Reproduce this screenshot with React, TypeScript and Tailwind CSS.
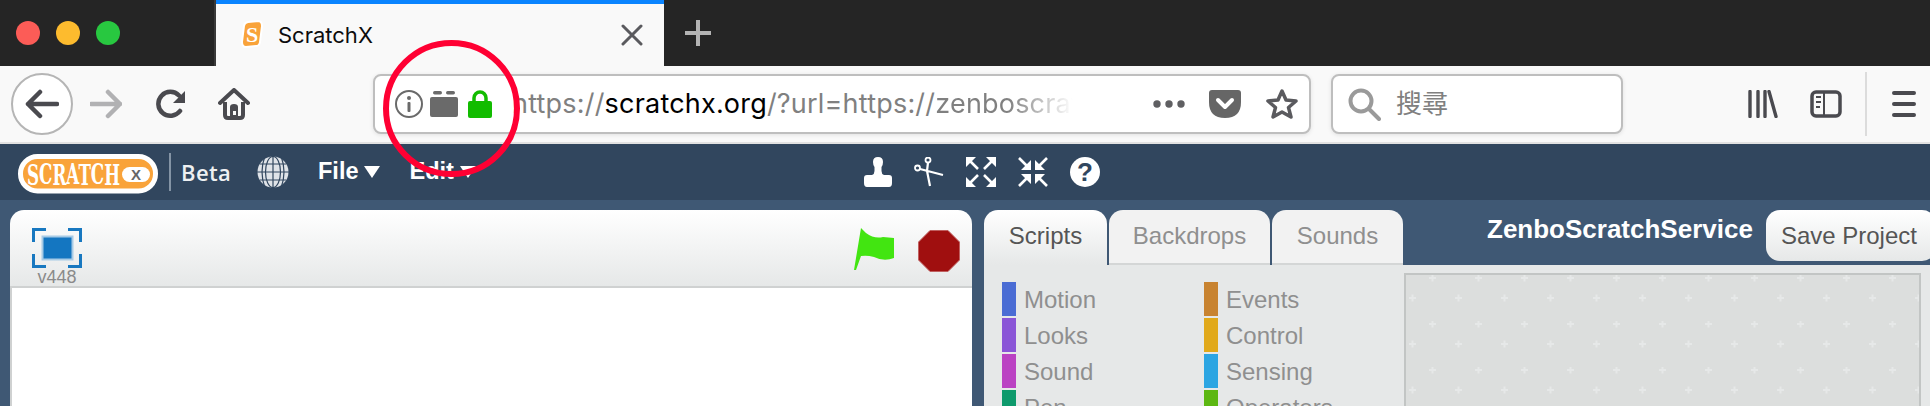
import React from 'react';

const sans = "font-['Liberation_Sans',Arial,sans-serif]";
const ui = "font-['Inter','Noto_Sans_CJK_TC',sans-serif]";

const categories = [
  { name: 'Motion', color: 'bg-[#4a6cd4]' },
  { name: 'Events', color: 'bg-[#c88330]' },
  { name: 'Looks', color: 'bg-[#8a55d7]' },
  { name: 'Control', color: 'bg-[#e1a91a]' },
  { name: 'Sound', color: 'bg-[#bb42c3]' },
  { name: 'Sensing', color: 'bg-[#2ca5e2]' },
  { name: 'Pen', color: 'bg-[#0e9a6c]' },
  { name: 'Operators', color: 'bg-[#5cb712]' },
];

const Favicon: React.FC = () => (
  <svg width="24" height="28" viewBox="0 0 24 28" className="mb-[3px] shrink-0">
    <path d="M8 2 L18 1 Q22 1 22 6 L20 22 Q19.5 26 16 26 L6 27 Q2 27 2 22 L4 6 Q4.5 2.5 8 2Z" fill="#f9a33a" stroke="#fff" strokeWidth="2" />
    <text x="12" y="22" textAnchor="middle" fontFamily="Liberation Serif" fontWeight="700" fontSize="22" fill="#fff">S</text>
  </svg>
);

const TabStrip: React.FC = () => (
  <div className="flex h-[66px] shrink-0 bg-[#252525]">
    <div className="flex w-[216px] shrink-0 items-center gap-[16px] pl-[16px] border-r-2 border-[#3a3a3a]">
      <span className="size-[24px] rounded-full bg-[#fc5c57]" />
      <span className="size-[24px] rounded-full bg-[#fdbb2e]" />
      <span className="size-[24px] rounded-full bg-[#28c840]" />
    </div>
    <div className={`flex w-[448px] shrink-0 items-center border-t-4 border-[#0a84ff] bg-[#f9f9f9] pl-[24px] ${ui}`}>
      <Favicon />
      <span className="ml-[14px] text-[22px] leading-none text-[#0c0c0d]">ScratchX</span>
      <svg width="22" height="22" viewBox="0 0 22 22" className="ml-[248px]">
        <path d="M2 2 L20 20 M20 2 L2 20" stroke="#5a5a5e" strokeWidth="3" strokeLinecap="round" />
      </svg>
    </div>
    <div className="flex flex-1 items-center pl-[20px]">
      <svg width="28" height="28" viewBox="0 0 28 28">
        <path d="M14 1 V27 M1 14 H27" stroke="#b4b4b4" strokeWidth="4" />
      </svg>
    </div>
  </div>
);

const NavIcons: React.FC = () => (
  <>
    <div className="flex size-[62px] shrink-0 items-center justify-center rounded-full border-2 border-[#b5b5b5] bg-white">
      <svg width="34" height="30" viewBox="0 0 34 30">
        <path d="M32 15 H3 M15 3 L3 15 L15 27" fill="none" stroke="#4a4a4f" strokeWidth="4.5" strokeLinecap="round" strokeLinejoin="round" />
      </svg>
    </div>
    <svg width="32" height="30" viewBox="0 0 32 30" className="ml-[17px] shrink-0">
      <path d="M1 15 H30 M18 3 L30 15 L18 27" fill="none" stroke="#b1b1b3" strokeWidth="4.5" strokeLinecap="round" strokeLinejoin="round" />
    </svg>
    <svg width="30" height="30" viewBox="0 0 30 30" className="ml-[34px] shrink-0">
      <path d="M24 22 A12 12 0 1 1 23 6.5" fill="none" stroke="#4a4a4f" strokeWidth="4.5" strokeLinecap="round" />
      <path d="M29 2 V14 H17Z" fill="#4a4a4f" />
    </svg>
    <svg width="32" height="32" viewBox="0 0 32 32" className="ml-[32px] shrink-0">
      <path d="M2 15 L16 2 L30 15" fill="none" stroke="#4a4a4f" strokeWidth="4" strokeLinecap="round" strokeLinejoin="round" />
      <path d="M7 14 V27 Q7 30 10 30 H22 Q25 30 25 27 V14" fill="none" stroke="#4a4a4f" strokeWidth="4" />
      <path d="M12 30 V19 Q12 16 16 16 Q20 16 20 19 V30Z" fill="#4a4a4f" />
      <rect x="15" y="23" width="3" height="4" fill="#f9f9f9" />
    </svg>
  </>
);

const SiteIcons: React.FC = () => (
  <div className="flex shrink-0 items-center">
    <svg width="30" height="30" viewBox="0 0 30 30" className="ml-[19px]">
      <circle cx="15" cy="15" r="13" fill="none" stroke="#6a6a6a" strokeWidth="2" />
      <circle cx="15" cy="9" r="2" fill="#6a6a6a" />
      <rect x="13.5" y="13" width="3" height="10" rx="1" fill="#6a6a6a" />
    </svg>
    <svg width="28" height="26" viewBox="0 0 28 26" className="ml-[6px]">
      <rect x="3" y="0" width="9" height="3.5" rx="1.7" fill="#6a6a6a" />
      <rect x="16" y="0" width="9" height="3.5" rx="1.7" fill="#6a6a6a" />
      <rect x="0" y="6" width="28" height="20" rx="2" fill="#6a6a6a" />
    </svg>
    <svg width="24" height="28" viewBox="0 0 24 28" className="ml-[10px]">
      <path d="M6 13 V8 A6 6 0 0 1 18 8 V13" fill="none" stroke="#12bc00" strokeWidth="3.5" />
      <rect x="0" y="11" width="24" height="17" rx="2" fill="#12bc00" />
    </svg>
  </div>
);

const UrlBar: React.FC = () => (
  <div className={`ml-[123px] flex h-[60px] w-[938px] shrink-0 items-center rounded-[8px] border-2 border-[#bebebe] bg-white shadow-[0_1px_4px_rgba(0,0,0,0.1)] ${ui}`}>
    <SiteIcons />
    <div className="ml-[20px] w-[572px] shrink-0 overflow-hidden whitespace-nowrap text-[27px] leading-[34px] tracking-[0.2px] text-[#808080]">
      https://<span className="text-black">scratchx.org</span>/?url=https://
      <span className="bg-linear-to-r from-[#808080] from-50% to-white to-95% bg-clip-text text-transparent">zenboscrat</span>
    </div>
    <svg width="32" height="8" viewBox="0 0 32 8" className="ml-[69px] shrink-0">
      <circle cx="4" cy="4" r="3.7" fill="#5f5f62" />
      <circle cx="16" cy="4" r="3.7" fill="#5f5f62" />
      <circle cx="28" cy="4" r="3.7" fill="#5f5f62" />
    </svg>
    <svg width="32" height="28" viewBox="0 0 32 28" className="ml-[24px] shrink-0">
      <path d="M3 0 H29 Q32 0 32 3 V12 Q32 28 16 28 Q0 28 0 12 V3 Q0 0 3 0Z" fill="#666" />
      <path d="M9 10 L16 17 L23 10" fill="none" stroke="#fff" strokeWidth="4" strokeLinecap="round" strokeLinejoin="round" />
    </svg>
    <svg width="32" height="32" viewBox="0 0 32 32" className="ml-[25px] shrink-0">
      <path d="M16 3 L20 12 L30 13 L22.5 19.5 L25 29 L16 24 L7 29 L9.5 19.5 L2 13 L12 12Z" fill="none" stroke="#5a5a5e" strokeWidth="3.5" strokeLinejoin="round" />
    </svg>
  </div>
);

const SearchBar: React.FC = () => (
  <div className={`ml-[20px] flex h-[60px] w-[292px] shrink-0 items-center rounded-[8px] border-2 border-[#bebebe] bg-white pl-[15px] shadow-[0_1px_4px_rgba(0,0,0,0.1)] ${ui}`}>
    <svg width="33" height="33" viewBox="0 0 33 33" className="shrink-0">
      <circle cx="13" cy="13" r="10.5" fill="none" stroke="#9a9a9a" strokeWidth="4" />
      <path d="M21 21 L31 31" stroke="#9a9a9a" strokeWidth="4" strokeLinecap="round" />
    </svg>
    <span className="ml-[15px] text-[26px] leading-none text-[#808080]">搜尋</span>
  </div>
);

const RightIcons: React.FC = () => (
  <>
    <svg width="30" height="28" viewBox="0 0 30 28" className="ml-[125px] shrink-0">
      <path d="M2 1.5 V26.5 M10 1.5 V26.5 M17 1.5 V26.5 M21 1.5 L28 26.5" stroke="#4a4a4f" strokeWidth="3.4" strokeLinecap="round" />
    </svg>
    <svg width="32" height="28" viewBox="0 0 32 28" className="ml-[32px] shrink-0">
      <rect x="2" y="2" width="28" height="24" rx="4" fill="none" stroke="#4a4a4f" strokeWidth="3.5" />
      <path d="M14 2 V26" stroke="#4a4a4f" strokeWidth="2" />
      <path d="M6 7 H11 M6 12 H11 M6 17 H10" stroke="#4a4a4f" strokeWidth="2" />
    </svg>
    <div className="ml-[23px] h-[64px] w-[2px] shrink-0 bg-[#dcdcdc]" />
    <svg width="24" height="26" viewBox="0 0 24 26" className="ml-[25px] shrink-0">
      <path d="M2 2 H22 M2 13 H22 M2 24 H22" stroke="#4a4a4f" strokeWidth="4" strokeLinecap="round" />
    </svg>
  </>
);

const Toolbar: React.FC = () => (
  <div className="flex h-[78px] shrink-0 items-center border-b-2 border-[#e2e2e2] bg-[#f9f9f9] pl-[11px]">
    <NavIcons />
    <UrlBar />
    <SearchBar />
    <RightIcons />
  </div>
);

const ScratchLogo: React.FC = () => (
  <svg width="140" height="44" viewBox="0 0 140 44" className="shrink-0">
    <rect x="2.5" y="6.5" width="135" height="34.5" rx="17" fill="#f9a33a" stroke="#fff" strokeWidth="5" />
    <text x="9" y="35" dy="0 -1 1 -1 1 -1 1" fontFamily="DejaVu Serif" fontWeight="700" fontSize="27" textLength="93" lengthAdjust="spacingAndGlyphs" fill="#fff">
      SCRATCH
    </text>
    <rect x="104" y="17" width="28" height="15" rx="7.5" fill="#fff" />
    <text x="118" y="30" textAnchor="middle" fontFamily="Liberation Sans" fontWeight="700" fontSize="15" fill="#666">X</text>
  </svg>
);

const Caret: React.FC = () => (
  <svg width="16" height="12" viewBox="0 0 16 12" className="ml-[6px] shrink-0">
    <path d="M0 0 H16 L8 12Z" fill="#fff" />
  </svg>
);

const Globe: React.FC = () => (
  <svg width="32" height="32" viewBox="0 0 32 32" className="ml-[26px] shrink-0">
    <circle cx="16" cy="16" r="15.5" fill="#dfe3e8" />
    <g fill="none" stroke="#31465e" strokeWidth="1.2">
      <ellipse cx="16" cy="16" rx="7.5" ry="15.5" />
      <path d="M16 0 V32 M0 16 H32 M3 8 H29 M3 24 H29 M8 0 Q2 16 8 32 M24 0 Q30 16 24 32" />
    </g>
  </svg>
);

const EditorTools: React.FC = () => (
  <div className="ml-[387px] flex shrink-0 items-center">
    <svg width="30" height="30" viewBox="0 0 30 30" className="shrink-0">
      <path d="M15 0 Q20 0 20 5 Q20 8 18.5 10 V14 Q18.5 17 21 18 H26 Q29 18 29 21 V26 Q29 30 26 30 H4 Q1 30 1 26 V21 Q1 18 4 18 H9 Q11.5 17 11.5 14 V10 Q10 8 10 5 Q10 0 15 0Z" fill="#fff" />
    </svg>
    <svg width="30" height="30" viewBox="0 0 30 30" className="ml-[21px] shrink-0">
      <circle cx="14" cy="3" r="2.5" fill="none" stroke="#fff" strokeWidth="1.8" />
      <circle cx="3.5" cy="11" r="2.5" fill="none" stroke="#fff" strokeWidth="1.8" />
      <path d="M14 5.5 L13 14 L16 29 M6 12 L29 18" fill="none" stroke="#fff" strokeWidth="2.2" />
    </svg>
    <svg width="30" height="30" viewBox="0 0 30 30" className="ml-[22px] shrink-0">
      <path d="M3 3 L12 12 M27 3 L18 12 M3 27 L12 18 M27 27 L18 18" stroke="#fff" strokeWidth="2.6" />
      <path d="M0 0 H10 L0 10Z M30 0 V10 L20 0Z M0 30 V20 L10 30Z M30 30 H20 L30 20Z" fill="#fff" />
    </svg>
    <svg width="30" height="30" viewBox="0 0 30 30" className="ml-[22px] shrink-0">
      <path d="M1 1 L9 9 M29 1 L21 9 M1 29 L9 21 M29 29 L21 21" stroke="#fff" strokeWidth="2.6" />
      <path d="M13 13 H3 L13 3Z M17 13 V3 L27 13Z M13 17 V27 L3 17Z M17 17 H27 L17 27Z" fill="#fff" />
    </svg>
    <div className={`ml-[22px] flex size-[30px] shrink-0 items-center justify-center rounded-full bg-white text-[26px] font-bold leading-none text-[#31465e] ${sans}`}>
      ?
    </div>
  </div>
);

const TopBar: React.FC = () => (
  <div className={`flex h-[56px] shrink-0 items-center bg-[#31465e] pl-[18px] ${sans}`}>
    <ScratchLogo />
    <div className="ml-[11px] h-[38px] w-[2px] shrink-0 bg-[#8494a5]" />
    <span className="ml-[10px] w-[50px] shrink-0 text-[22px] leading-none tracking-[0.4px] text-[#eef0f2] font-['Open_Sans',sans-serif] font-semibold">Beta</span>
    <Globe />
    <span className="ml-[29px] text-[23.5px] font-bold leading-none text-white">File</span>
    <Caret />
    <span className="ml-[29px] text-[23.5px] font-bold leading-none text-white">Edit</span>
    <Caret />
    <EditorTools />
  </div>
);

const FullscreenIcon: React.FC = () => (
  <svg width="50" height="40" viewBox="0 0 50 40" className="shrink-0">
    <path d="M14 1.5 H1.5 V14 M36 1.5 H48.5 V14 M14 38.5 H1.5 V26 M36 38.5 H48.5 V26" fill="none" stroke="#1878c0" strokeWidth="3" />
    <rect x="10.5" y="8.5" width="30" height="23" fill="#1476c1" stroke="#a8cbe6" strokeWidth="2" />
  </svg>
);

const Stage: React.FC = () => (
  <div className="ml-[10px] flex w-[962px] shrink-0 flex-col">
    <div className="flex h-[76px] shrink-0 items-start justify-between rounded-t-[14px] bg-linear-to-b from-white to-[#e6e8e8] pl-[22px] pr-[12px] pt-[18px]">
      <div className="flex flex-col items-center">
        <FullscreenIcon />
        <span className={`mt-[1px] text-[18px] leading-[17px] text-[#8a8a8a] ${sans}`}>v448</span>
      </div>
      <div className="flex items-start">
        <svg width="40" height="42" viewBox="0 0 40 42" className="shrink-0">
          <path d="M7 0 L12 5 Q20 11 29 9 L40 10 V30 Q30 34 20 29 Q13 27 7 28 L2 42 L0 42Z" fill="#42e511" />
        </svg>
        <svg width="42" height="42" viewBox="0 0 42 42" className="ml-[24px] mt-[2px] shrink-0">
          <path d="M12 0.5 H30 L41.5 12 V30 L30 41.5 H12 L0.5 30 V12Z" fill="#a00f0f" stroke="#c06060" strokeWidth="1" />
        </svg>
      </div>
    </div>
    <div className="flex-1 border-t-2 border-l-2 border-[#cfd1d1] bg-white" />
  </div>
);

const ScriptArea: React.FC = () => (
  <div className="mt-[8px] h-[200px] w-[517px] shrink-0 border-2 border-b-0 border-[#c2c5c4] bg-[#dcdedd]">
    <svg width="100%" height="100%">
      <defs>
        <pattern id="grid" width="46" height="46" patternUnits="userSpaceOnUse">
          <path d="M23 3 H30 M26.5 -0.5 V6.5 M3 23 H10 M6.5 19.5 V26.5" stroke="#e6e8e8" strokeWidth="2" />
        </pattern>
      </defs>
      <rect width="100%" height="100%" fill="url(#grid)" />
    </svg>
  </div>
);

const ScriptsPanel: React.FC = () => (
  <div className={`ml-[12px] flex min-w-0 flex-1 flex-col ${sans}`}>
    <div className="flex h-[55px] shrink-0 items-start">
      <div className="flex h-[55px] w-[123px] shrink-0 justify-center rounded-t-[14px] bg-linear-to-b from-white to-[#e6e8e8] pt-[12px] text-[24px] leading-[28px] text-[#555]">
        Scripts
      </div>
      <div className="ml-[2px] flex h-[55px] w-[161px] shrink-0 justify-center rounded-t-[14px] border-b-2 border-[#d4d6d6] bg-[#f2f2f2] pt-[12px] text-[24px] leading-[28px] text-[#8f8f8f]">
        Backdrops
      </div>
      <div className="ml-[2px] flex h-[55px] w-[131px] shrink-0 justify-center rounded-t-[14px] border-b-2 border-[#d4d6d6] bg-[#f2f2f2] pt-[12px] text-[24px] leading-[28px] text-[#8f8f8f]">
        Sounds
      </div>
      <span className="ml-[84px] mt-[5px] text-[26px] font-bold leading-[28px] text-white">ZenboScratchService</span>
      <div className="ml-[13px] flex h-[51px] w-[170px] shrink-0 items-center rounded-[14px] bg-linear-to-b from-white to-[#e6e8e8] pl-[15px] text-[24px] leading-none text-[#555]">
        Save Project
      </div>
    </div>
    <div className="flex flex-1 bg-[#e6e8e8]">
      <div className="grid h-fit w-[420px] shrink-0 grid-cols-[202px_1fr] gap-y-[2px] pl-[18px] pt-[17px]">
        {categories.map((cat) => (
          <div key={cat.name} className="flex h-[34px] items-center text-[24px] leading-none text-[#8f8f8f]">
            <span className={`h-[34px] w-[14px] shrink-0 ${cat.color}`} />
            <span className="ml-[8px] pt-[2px]">{cat.name}</span>
          </div>
        ))}
      </div>
      <ScriptArea />
    </div>
  </div>
);

const App: React.FC = () => {
  return (
    <div className="relative flex h-[406px] w-[1930px] flex-col overflow-hidden bg-[#3f5874]">
      <TabStrip />
      <Toolbar />
      <TopBar />
      <div className="flex min-h-0 flex-1 pt-[10px]">
        <Stage />
        <ScriptsPanel />
      </div>
      {/* hand-drawn annotation over the screenshot */}
      <div className="absolute left-[383px] top-[40px] size-[137px] rounded-full border-[6px] border-[#ff0033]" />
    </div>
  );
};

export default App;
